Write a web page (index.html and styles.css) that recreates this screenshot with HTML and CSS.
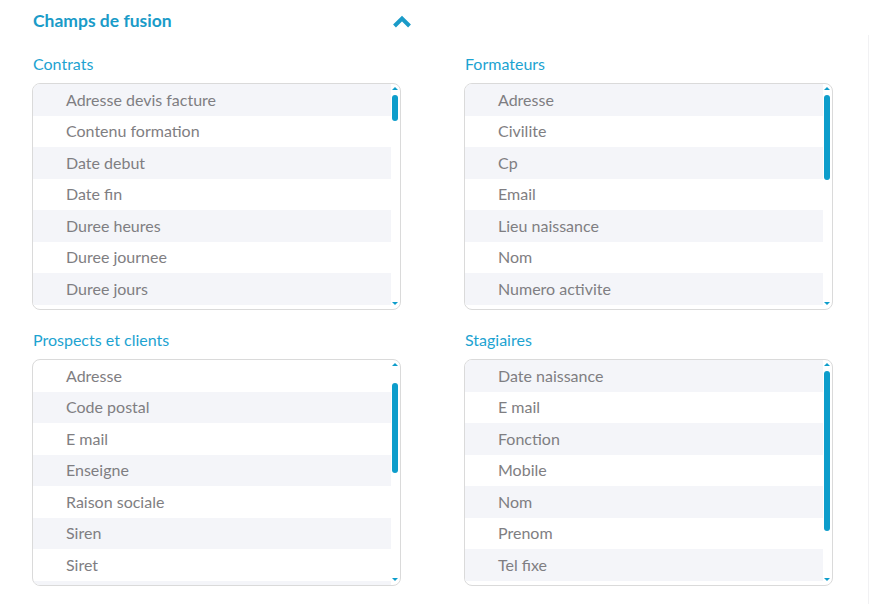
FILE: index.html
```html
<!DOCTYPE html>
<html lang="fr">
<head>
<meta charset="utf-8">
<title>Champs de fusion</title>
<link rel="stylesheet" href="styles.css">
</head>
<body>
<div class="page">
  <div class="header">
    <h2 class="title">Champs de fusion</h2>
    <svg class="chevron" width="20" height="13" viewBox="0 0 20 13"><polyline points="2.5,11 10,3.5 17.5,11" fill="none" stroke="#1a9bc8" stroke-width="4" stroke-linecap="butt" stroke-linejoin="miter"/></svg>
  </div>
  <div class="grid">
    <section class="group">
      <div class="label">Contrats</div>
      <div class="box">
        <ul class="list">
          <li class="alt">Adresse devis facture</li>
          <li>Contenu formation</li>
          <li class="alt">Date debut</li>
          <li>Date fin</li>
          <li class="alt">Duree heures</li>
          <li>Duree journee</li>
          <li class="alt">Duree jours</li>
          <li>Intitule formation</li>
        </ul>
        <div class="bar">
          <span class="arrow up"></span>
          <div class="track"><div class="thumb t1"></div></div>
          <span class="arrow down"></span>
        </div>
      </div>
    </section>
    <section class="group">
      <div class="label">Formateurs</div>
      <div class="box">
        <ul class="list">
          <li class="alt">Adresse</li>
          <li>Civilite</li>
          <li class="alt">Cp</li>
          <li>Email</li>
          <li class="alt">Lieu naissance</li>
          <li>Nom</li>
          <li class="alt">Numero activite</li>
          <li>Prenom</li>
        </ul>
        <div class="bar">
          <span class="arrow up"></span>
          <div class="track"><div class="thumb t2"></div></div>
          <span class="arrow down"></span>
        </div>
      </div>
    </section>
    <section class="group">
      <div class="label">Prospects et clients</div>
      <div class="box">
        <ul class="list">
          <li>Adresse</li>
          <li class="alt">Code postal</li>
          <li>E mail</li>
          <li class="alt">Enseigne</li>
          <li>Raison sociale</li>
          <li class="alt">Siren</li>
          <li>Siret</li>
          <li class="alt">Tel fixe</li>
        </ul>
        <div class="bar">
          <span class="arrow up"></span>
          <div class="track"><div class="thumb t3"></div></div>
          <span class="arrow down"></span>
        </div>
      </div>
    </section>
    <section class="group">
      <div class="label">Stagiaires</div>
      <div class="box">
        <ul class="list">
          <li class="alt">Date naissance</li>
          <li>E mail</li>
          <li class="alt">Fonction</li>
          <li>Mobile</li>
          <li class="alt">Nom</li>
          <li>Prenom</li>
          <li class="alt">Tel fixe</li>
          <li>Ville</li>
        </ul>
        <div class="bar">
          <span class="arrow up"></span>
          <div class="track"><div class="thumb t4"></div></div>
          <span class="arrow down"></span>
        </div>
      </div>
    </section>
  </div>
</div>
<div class="edge"></div>
</body>
</html>
```
FILE: styles.css
```css
html, body {
  margin: 0;
  padding: 0;
  background: #ffffff;
}
body {
  display: flex;
  min-height: 100vh;
  font-family: Lato, "Open Sans", "Liberation Sans", sans-serif;
}
.page {
  width: 868px;
  box-sizing: border-box;
  padding: 9px 0 0 32px;
}
.edge {
  width: 1px;
  margin-top: 35px;
  background: #f1f1f3;
}
.header {
  width: 380px;
  height: 24px;
  display: flex;
  align-items: center;
  justify-content: space-between;
  margin-bottom: 21px;
}
.title {
  margin: 0 0 0 1px;
  font-size: 17.5px;
  line-height: 24px;
  font-weight: 700;
  color: #1a9bc8;
}
.chevron {
  display: block;
  margin-top: 1px;
}
.grid {
  display: grid;
  grid-template-columns: 369px 369px;
  column-gap: 63px;
  row-gap: 20px;
}
.label {
  font-size: 16px;
  line-height: 20px;
  color: #1da3d1;
  margin: 0 0 9px 1px;
}
.box {
  display: flex;
  height: 227px;
  box-sizing: border-box;
  border: 1px solid #dadada;
  border-radius: 8px;
  overflow: hidden;
}
.list {
  flex: 1;
  min-width: 0;
  margin: 0;
  padding: 0;
  list-style: none;
  overflow: hidden;
}
.list li {
  padding: 4.5px 0 4.5px 33px;
  font-size: 16px;
  line-height: 22.5px;
  color: #7f7e82;
  white-space: nowrap;
}
.list li.alt {
  background: #f4f5f9;
}
.bar {
  flex: 0 0 9px;
  width: 9px;
  display: flex;
  flex-direction: column;
  align-items: flex-start;
  padding-left: 1px;
  box-sizing: border-box;
}
.arrow {
  display: block;
  width: 0;
  height: 0;
  border-left: 3px solid transparent;
  border-right: 3px solid transparent;
}
.arrow.up {
  margin: 3px 0 5px;
  border-bottom: 3px solid #0d9dcb;
}
.arrow.down {
  margin: 5px 0 4px;
  border-top: 3px solid #0d9dcb;
}
.track {
  flex: 1;
  width: 6px;
}
.thumb {
  width: 6px;
  border-radius: 3px;
  background: #0d9dcb;
}
.t1 { height: 26px; }
.t2 { height: 85px; }
.t3 { height: 90px; margin-top: 12px; }
.t4 { height: 160px; }
```
